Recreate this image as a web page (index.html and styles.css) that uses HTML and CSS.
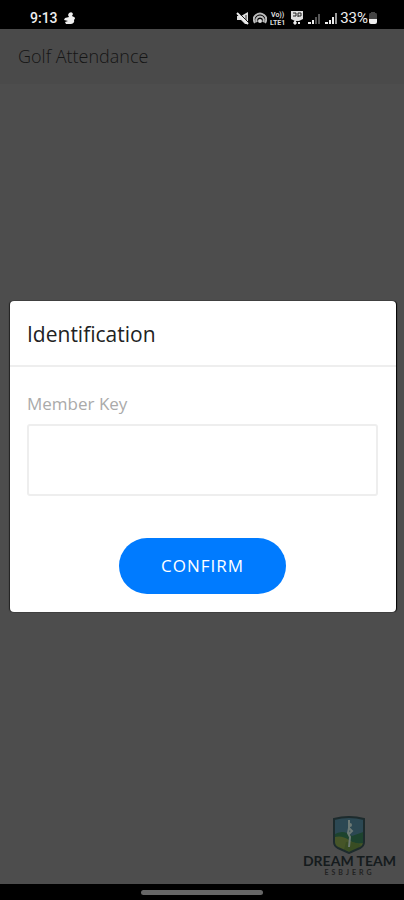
FILE: index.html
```html
<!DOCTYPE html>
<html lang="en">
<head>
    <meta charset="UTF-8">
    <meta name="viewport" content="width=device-width, initial-scale=1.0">
    <title>Golf Attendance</title>
    <link rel="stylesheet" href="styles.css">
</head>
<body>
    <div class="status-bar">
        <span class="clock">9:13</span>
        <svg class="app-icon" width="12" height="14" viewBox="0 0 12 14">
            <path d="M5 2Q8 0 9 3L8 5L10 6Q12 7 10 9Q11 12 7 13H2L1 11L4 10L0 9L1 7L5 6L4 4Z" fill="#eee"/>
        </svg>
        <div class="status-icons">
            <!-- muted speaker -->
            <svg width="14" height="16" viewBox="0 0 14 16">
                <path d="M1 6h4l7-4v12H9l-4-4H1z" fill="#ddd"/>
                <path d="M2 2l11 11" stroke="#000" stroke-width="1"/>
                <path d="M1 3l11 11" stroke="#eee" stroke-width="2"/>
                <path d="M10 5v5" stroke="#333" stroke-width="1"/>
            </svg>
            <!-- hotspot -->
            <svg width="14" height="16" viewBox="0 0 14 16">
                <path d="M2 13Q-1 8 3 5q4-3 8 0q4 3 1 8M4 12Q2 9 5 7q2-1 4 0q3 2 1 5" fill="none" stroke="#bbb" stroke-width="2"/>
                <circle cx="7" cy="11" r="2" fill="#ddd"/>
            </svg>
            <!-- volte -->
            <svg class="volte" width="17" height="16" viewBox="0 0 17 16">
                <text x="1" y="7">Vo))</text>
                <text x="0" y="15">LTE1</text>
            </svg>
            <!-- wifi calling -->
            <svg width="14" height="16" viewBox="0 0 14 16">
                <path d="M1 1h12v8l-4 2H5L1 9z" fill="#ddd"/>
                <path d="M3 3h3v3H3M8 7V3h3v3H8" fill="none" stroke="#222" stroke-width="1"/>
                <path d="M3 13l2-3 2 3-2 2zM8 12h2v2H8z" fill="#eee"/>
            </svg>
            <!-- signal 1 -->
            <svg width="14" height="16" viewBox="0 0 14 16">
                <path d="M1 12h3v2H1zM5 10h2v4H5z" fill="#eee"/>
                <path d="M8 7h2v7H8zM11 4h2v10h-2z" fill="#555"/>
            </svg>
            <!-- signal 2 -->
            <svg width="14" height="16" viewBox="0 0 14 16">
                <path d="M1 12h3v2H1zM5 10h2v4H5zM8 7h2v7H8z" fill="#eee"/>
                <path d="M11 3h2v11h-2z" fill="#999"/>
            </svg>
        </div>
        <span class="battery-level">33%</span>
        <svg width="10" height="14" viewBox="0 0 10 14">
            <path d="M3 1h4v1h1q1 0 1 2v4H1V4q0-2 1-2h1z" fill="#444"/>
            <path d="M1 8h8v3q0 2-2 2H3q-2 0-2-2z" fill="#eee"/>
        </svg>
    </div>

    <div class="app">
        <header class="app-header">
            <h1>Golf Attendance</h1>
        </header>

        <footer class="brand">
            <svg width="34" height="38" viewBox="0 0 34 38">
                <defs>
                    <clipPath id="shield">
                        <path d="M2 3Q17-1 32 3V26Q32 30 28 32L17 37L6 32Q2 30 2 26Z"/>
                    </clipPath>
                </defs>
                <g clip-path="url(#shield)">
                    <path d="M0 0h34v38H0z" fill="#2c4853"/>
                    <path d="M0 20Q10 12 20 20L34 15V38H0Z" fill="#1d432e"/>
                    <path d="M0 22Q9 18 17 24T34 26V38H0Z" fill="#465528"/>
                    <path d="M14 26Q21 25 29 29L23 36L12 34Z" fill="#394d23"/>
                </g>
                <path d="M2 3Q17-1 32 3V26Q32 30 28 32L17 37L6 32Q2 30 2 26Z" fill="none" stroke="#1d2b2d" stroke-width="2"/>
                <!-- golfer -->
                <path d="M17 4V12L16 17L18 21L17 31M17 12L20 15L17 18" fill="none" stroke="#6c7975" stroke-width="2"/>
                <circle cx="18" cy="9" r="2" fill="#6c7975"/>
            </svg>
            <span class="brand-name">DREAM TEAM</span>
            <span class="brand-place">ESBJERG</span>
        </footer>

        <div class="overlay">
            <form class="dialog" role="dialog" aria-labelledby="dialog-title">
                <h2 id="dialog-title">Identification</h2>
                <div class="dialog-body">
                    <label for="member-key">Member Key</label>
                    <input type="text" id="member-key" name="member-key">
                    <button type="button" id="confirm-btn">CONFIRM</button>
                </div>
            </form>
        </div>
    </div>

    <div class="nav-bar">
        <div class="nav-handle"></div>
    </div>
</body>
</html>
```
FILE: styles.css
```css
* {
    box-sizing: border-box;
}

body {
    display: flex;
    flex-direction: column;
    min-height: 100vh;
    margin: 0;
    background-color: #4d4d4d;
    font-family: "Open Sans", "Noto Sans", sans-serif;
}

.status-bar {
    display: flex;
    align-items: center;
    height: 29px;
    padding: 7px 26px 0 30px;
    background-color: #000;
    color: #eee;
    font-family: Roboto, sans-serif;
    font-size: 14px;
    font-weight: 500;
    line-height: 20px;
}

.battery-level {
    font-size: 15px;
    font-weight: 400;
}

.app-icon {
    margin-left: 6px;
}

.status-icons {
    display: flex;
    align-items: center;
    gap: 3px;
    margin-left: auto;
    margin-right: 2px;
}

.volte {
    fill: #ddd;
    font-size: 7px;
    font-weight: 700;
    line-height: 8px;
}

.app {
    position: relative;
    display: flex;
    flex: 1;
    flex-direction: column;
}

.app-header {
    padding: 15px 18px 16px;
    background-color: #4a4a4a;
}

h1 {
    margin: 0;
    color: #151515;
    font-size: 18px;
    font-weight: 300;
    line-height: 24px;
}

.brand {
    display: flex;
    flex-direction: column;
    align-items: center;
    align-self: flex-end;
    margin-top: auto;
    padding: 0 8px 8px;
    color: #151b1d;
}

.brand-name {
    font-family: Lato, sans-serif;
    font-size: 14px;
    font-weight: 700;
    line-height: 14px;
}

.brand-place {
    color: #222;
    font-family: Lato, sans-serif;
    font-size: 7px;
    font-weight: 700;
    letter-spacing: 3px;
    line-height: 8px;
}

.overlay {
    position: absolute;
    inset: 0;
    display: flex;
    align-items: center;
    padding: 0 8px 0 10px;
}

.dialog {
    flex: 1;
    border-radius: 4px;
    background-color: #fff;
    box-shadow: 1px 0 1px #000, -1px 0 1px #222;
}

h2 {
    margin: 0;
    padding: 19px 17px 17px;
    border-bottom: 2px solid #eee;
    color: #222;
    font-size: 21px;
    font-weight: 400;
    line-height: 28px;
}

.dialog-body {
    display: flex;
    flex-direction: column;
    padding: 25px 18px 18px 17px;
}

label {
    margin-bottom: 8px;
    color: #aaa;
    font-size: 17px;
    line-height: 24px;
}

input {
    width: 100%;
    height: 72px;
    padding: 0 16px;
    border: 2px solid #eee;
    border-radius: 3px;
    background-color: #fff;
    font-family: inherit;
    font-size: 18px;
}

button {
    align-self: center;
    margin-top: 42px;
    padding: 16px 42px;
    border: none;
    border-radius: 28px;
    background-color: #007bff;
    color: #fff;
    font-family: inherit;
    font-size: 17px;
    letter-spacing: 1px;
    line-height: 24px;
    cursor: pointer;
}

.nav-bar {
    display: flex;
    align-items: center;
    justify-content: center;
    height: 16px;
    background-color: #000;
}

.nav-handle {
    width: 30%;
    height: 5px;
    border-radius: 3px;
    background-color: #666;
}
```
